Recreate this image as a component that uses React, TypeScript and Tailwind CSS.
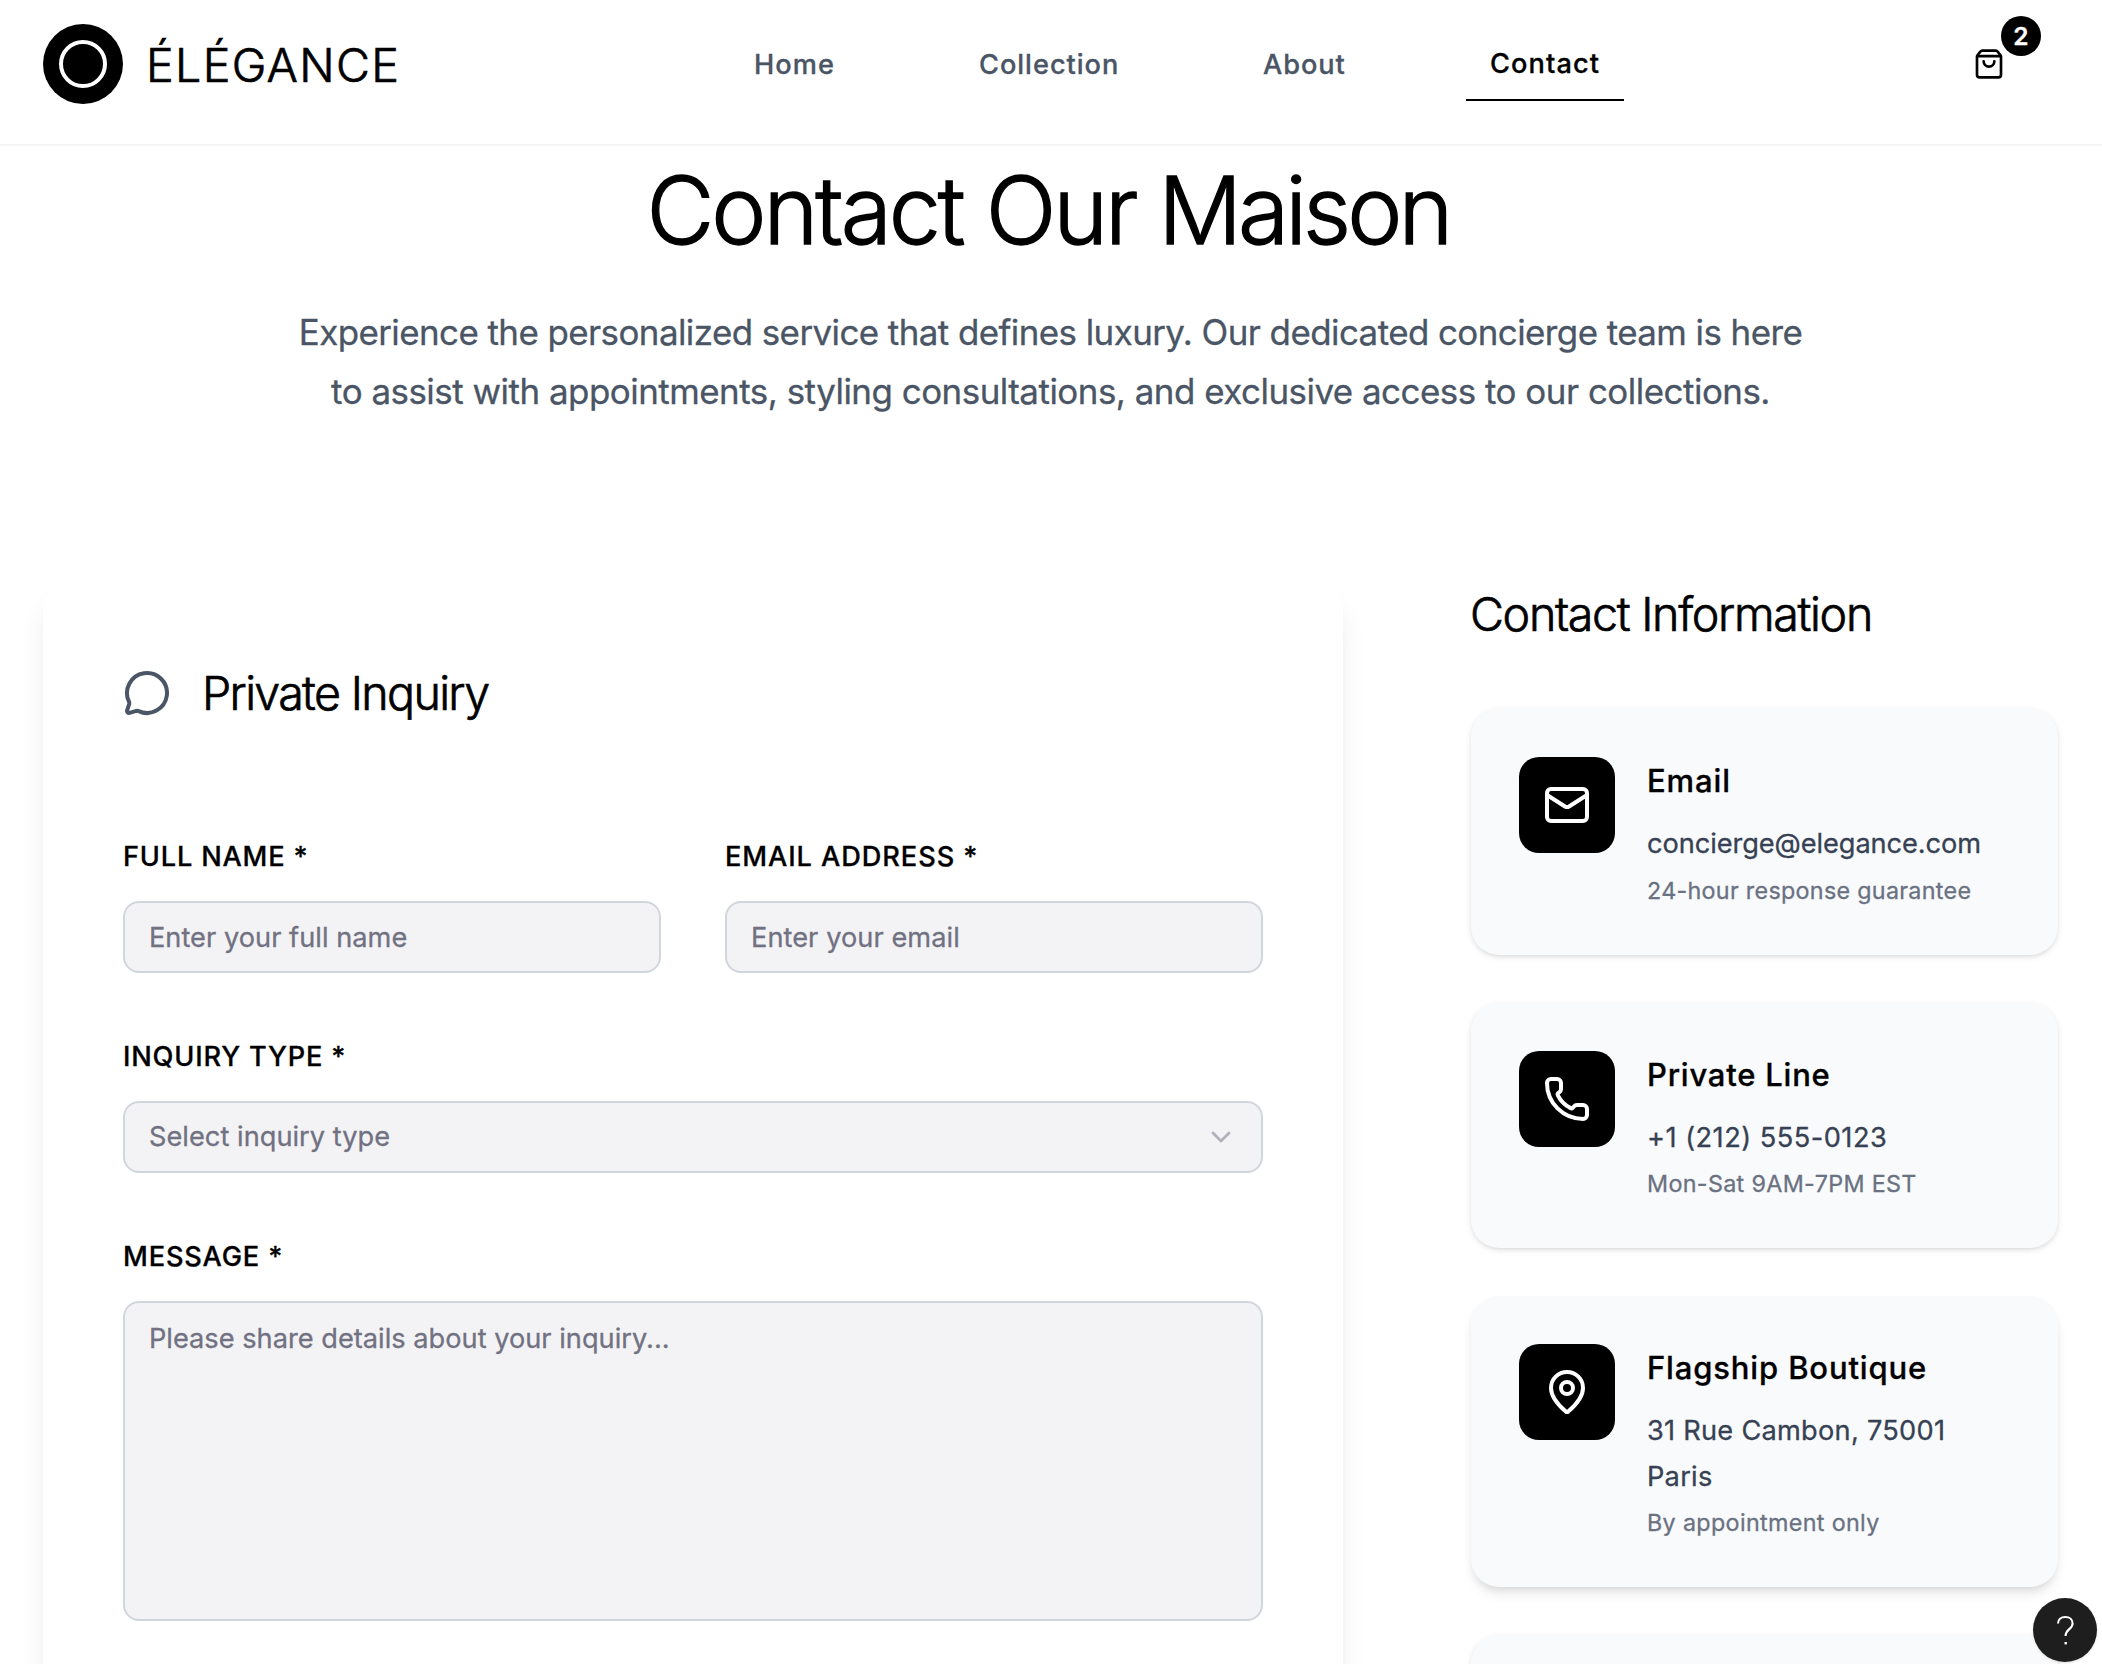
import type { ReactNode } from 'react';
import { ChevronDown, Mail, MapPin, MessageCircle, Phone, ShoppingBag } from 'lucide-react';

function Header() {
  return (
    <header className="flex h-[146px] items-start justify-between border-b-2 border-gray-100 bg-white pl-[43px] pr-[61px]">
      <div className="flex h-32 w-[685px] items-center gap-[23px]">
        <div className="flex size-20 items-center justify-center rounded-full bg-black">
          <div className="size-12 rounded-full border-4 border-white" />
        </div>
        <span className="pt-0.5 text-[46.6px] leading-none font-light tracking-[1.3px] text-black [-webkit-text-stroke:0.7px]">
          ÉLÉGANCE
        </span>
      </div>

      <nav className="flex h-32 flex-1 items-center gap-24 text-[27.2px] font-medium text-[#4a5565]">
        <a className="w-[131px] pt-0.5 pr-0 pl-[26px] tracking-[1.1px]">Home</a>
        <a className="w-[188px] px-6 pt-0.5 tracking-[0.97px]">Collection</a>
        <a className="w-[131px] px-6 pt-0.5 tracking-[0.9px]">About</a>
        <a className="flex h-[74px] w-[158px] items-center border-b-2 border-black px-6 pt-0.5 tracking-[1.1px] text-black">
          Contact
        </a>
      </nav>

      <button className="relative flex h-32 w-[104px] items-center justify-center text-black">
        <ShoppingBag className="size-8" />
        <span className="absolute top-4 right-0 flex size-10 items-center justify-center rounded-full bg-black text-[24.5px] leading-none font-semibold text-white">
          2
        </span>
      </button>
    </header>
  );
}

function Label({ children, className }: { children: ReactNode; className: string }) {
  return (
    <label className={`block h-10 text-[27.2px] leading-10 font-medium text-black ${className}`}>
      {children}
    </label>
  );
}

function InquiryForm() {
  return (
    <section className="h-[1300px] w-[1300px] shrink-0 rounded-[28px] bg-white p-20 shadow-[0_20px_30px_-6px_rgb(0_0_0/0.1),0_8px_12px_-8px_rgb(0_0_0/0.1)]">
      <div className="flex h-16 items-center gap-[31px]">
        <MessageCircle className="size-12 text-[#4a5565]" />
        <h2 className="pt-px text-[46.6px] leading-none font-light tracking-[-1.67px] text-black [-webkit-text-stroke:0.7px]">
          Private Inquiry
        </h2>
      </div>

      <form className="mt-28 flex flex-col gap-16 text-[27.2px] text-[#717182]">
        <div className="grid grid-cols-2 gap-16">
          <div>
            <Label className="tracking-[0.8px]">FULL NAME *</Label>
            <div className="mt-6 flex h-[72px] items-center rounded-2xl border-2 border-[#d1d5dc] bg-[#f3f3f5] pt-0.5 pl-6 tracking-[0.03px]">
              Enter your full name
            </div>
          </div>
          <div>
            <Label className="tracking-[0.92px]">EMAIL ADDRESS *</Label>
            <div className="mt-6 flex h-[72px] items-center rounded-2xl border-2 border-[#d1d5dc] bg-[#f3f3f5] pt-0.5 pl-6 tracking-[0.06px]">
              Enter your email
            </div>
          </div>
        </div>

        <div>
          <Label className="tracking-[0.82px]">INQUIRY TYPE *</Label>
          <div className="mt-6 flex h-[72px] items-center justify-between rounded-2xl border-2 border-[#d1d5dc] bg-[#f3f3f5] px-6 tracking-[0.03px]">
            Select inquiry type
            <ChevronDown className="size-8 opacity-50" />
          </div>
        </div>

        <div>
          <Label className="tracking-[0.84px]">MESSAGE *</Label>
          <div className="mt-6 h-80 rounded-2xl border-2 border-[#d1d5dc] bg-[#f3f3f5] px-6 py-4 leading-10 tracking-[0.01px]">
            Please share details about your inquiry...
          </div>
        </div>
      </form>
    </section>
  );
}

const restShadow = 'shadow-[0_2px_6px_0_rgb(0_0_0/0.1),0_2px_4px_-2px_rgb(0_0_0/0.1)]';
const raisedShadow = 'shadow-[0_8px_12px_-2px_rgb(0_0_0/0.1),0_4px_8px_-4px_rgb(0_0_0/0.1)]';

function InfoCard({
  icon,
  title,
  lines,
  note,
  titleTracking,
  lineTracking,
  noteTracking,
  shadow = restShadow,
}: {
  icon: ReactNode;
  title: string;
  lines: string[];
  note: string;
  titleTracking: string;
  lineTracking: string;
  noteTracking: string;
  shadow?: string;
}) {
  return (
    <div className={`flex items-start gap-8 rounded-[28px] bg-gray-50 p-12 ${shadow}`}>
      <div className="flex size-24 shrink-0 items-center justify-center rounded-[20px] bg-black text-white">
        {icon}
      </div>
      <div>
        <h3 className={`mb-4 text-[31px] leading-[48px] font-medium text-black ${titleTracking}`}>{title}</h3>
        {lines.map((line) => (
          <p key={line} className={`text-[27.2px] leading-[45.5px] whitespace-nowrap text-[#364153] ${lineTracking}`}>
            {line}
          </p>
        ))}
        <p className={`mt-2 text-[23.3px] leading-8 text-[#6a7282] ${noteTracking}`}>{note}</p>
      </div>
    </div>
  );
}

function ContactInfo() {
  return (
    <aside className="w-[587px] shrink-0">
      <h2 className="-ml-px h-16 pt-px text-[46.6px] leading-[64px] font-light whitespace-nowrap tracking-[-1.33px] text-black [-webkit-text-stroke:0.7px]">
        Contact Information
      </h2>
      <div className="mt-16 flex flex-col gap-12">
        <InfoCard
          icon={<Mail className="size-12" />}
          title="Email"
          lines={['concierge@elegance.com']}
          note="24-hour response guarantee"
          titleTracking="tracking-[0.9px]"
          lineTracking="tracking-[-0.07px]"
          noteTracking="tracking-[0.3px]"
        />
        <InfoCard
          icon={<Phone className="size-12" />}
          title="Private Line"
          lines={['+1 (212) 555-0123']}
          note="Mon-Sat 9AM-7PM EST"
          titleTracking="tracking-[0.78px]"
          lineTracking="tracking-[0.48px]"
          noteTracking="tracking-[0.35px]"
        />
        <InfoCard
          icon={<MapPin className="size-12" />}
          title="Flagship Boutique"
          lines={['31 Rue Cambon, 75001', 'Paris']}
          note="By appointment only"
          titleTracking="tracking-[0.85px]"
          lineTracking="tracking-[0.26px]"
          noteTracking="tracking-[0.35px]"
          shadow={raisedShadow}
        />
        <div className={`h-60 rounded-[28px] bg-gray-50 ${restShadow}`} />
      </div>
    </aside>
  );
}

export default function App() {
  return (
    <div className="relative h-[1664px] w-[2102px] overflow-hidden bg-white font-['Inter',sans-serif] [-webkit-text-stroke:0.3px]">
      <Header />
      <main className="px-[43px] pt-4">
        <h1 className="pr-1.5 text-center text-[93.1px] leading-[96px] font-light text-black [-webkit-text-stroke:1.3px]">
          <span className="tracking-[-3px]">Contact </span>
          <span className="tracking-[-3.2px]">Our </span>
          <span className="tracking-[-3.9px]">Maison</span>
        </h1>
        <p className="mt-[45px] text-center text-[34.9px] leading-[58.5px] text-[#4a5565]">
          <span className="block pr-px tracking-[-0.56px]">
            Experience the personalized service that defines luxury. Our dedicated concierge team is here
          </span>
          <span className="block pr-px tracking-[-0.49px]">
            to assist with appointments, styling consultations, and exclusive access to our collections.
          </span>
        </p>
        <div className="mt-[161px] flex items-start gap-32">
          <InquiryForm />
          <ContactInfo />
        </div>
      </main>

      <button className="absolute right-[5px] bottom-0.5 size-16 rounded-full bg-[#1e1e1e] shadow-sm">
        <svg viewBox="0 0 64 64" className="size-16" fill="none" stroke="white" strokeWidth="2.1">
          <path d="M25 25.6C25 21.6 28 19 32.3 19C36.7 19 39.6 21.6 39.6 25.4C39.6 31.4 32.5 31 32.5 38" />
          <path d="M31.5 45.2h2.4" strokeWidth="2.4" />
        </svg>
      </button>
    </div>
  );
}
